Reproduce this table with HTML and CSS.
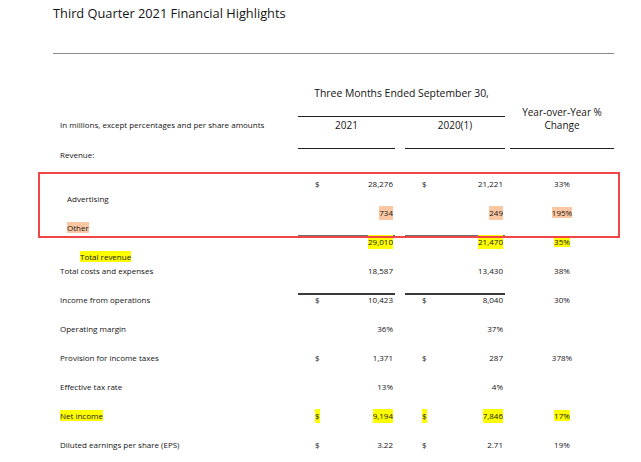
FILE: index.html
```html
<!DOCTYPE html>
<html lang="en">
<head>
<meta charset="utf-8">
<title>Third Quarter 2021 Financial Highlights</title>
<link rel="stylesheet" href="styles.css">
</head>
<body>
<div class="page">
  <h1 class="title">Third Quarter 2021 Financial Highlights</h1>
  <hr class="rule">
  <div class="table">
    <div class="head">
      <div class="period">Three Months Ended September 30,</div>
      <div class="yoy">Year-over-Year %<br>Change</div>
      <div class="units">In millions, except percentages and per share amounts</div>
      <div class="year y1">2021</div>
      <div class="year y2">2020(1)</div>
    </div>

    <div class="row section"><div class="label">Revenue:</div></div>

    <div class="row split">
      <div class="label sub">Advertising</div>
      <div class="amt a1"><span class="cur">$</span><span class="num">28,276</span></div>
      <div class="amt a2"><span class="cur">$</span><span class="num">21,221</span></div>
      <div class="pct">33%</div>
    </div>
    <div class="row split">
      <div class="label sub"><span class="hl-o">Other</span></div>
      <div class="amt a1"><span class="num hl-o">734</span></div>
      <div class="amt a2"><span class="num hl-o">249</span></div>
      <div class="pct"><span class="hl-o">195%</span></div>
    </div>
    <div class="row split">
      <div class="label total"><span class="hl-y">Total revenue</span></div>
      <div class="amt a1 ul-light"><span class="num hl-y">29,010</span></div>
      <div class="amt a2 ul-light"><span class="num hl-y">21,470</span></div>
      <div class="pct"><span class="hl-y">35%</span></div>
    </div>
    <div class="row">
      <div class="label">Total costs and expenses</div>
      <div class="amt a1"><span class="num">18,587</span></div>
      <div class="amt a2"><span class="num">13,430</span></div>
      <div class="pct">38%</div>
    </div>
    <div class="row">
      <div class="label">Income from operations</div>
      <div class="amt a1 ul-dark"><span class="cur">$</span><span class="num">10,423</span></div>
      <div class="amt a2 ul-dark"><span class="cur">$</span><span class="num">8,040</span></div>
      <div class="pct">30%</div>
    </div>
    <div class="row">
      <div class="label">Operating margin</div>
      <div class="amt a1"><span class="num">36%</span></div>
      <div class="amt a2"><span class="num">37%</span></div>
    </div>
    <div class="row">
      <div class="label">Provision for income taxes</div>
      <div class="amt a1"><span class="cur">$</span><span class="num">1,371</span></div>
      <div class="amt a2"><span class="cur">$</span><span class="num">287</span></div>
      <div class="pct">378%</div>
    </div>
    <div class="row">
      <div class="label">Effective tax rate</div>
      <div class="amt a1"><span class="num">13%</span></div>
      <div class="amt a2"><span class="num">4%</span></div>
    </div>
    <div class="row">
      <div class="label"><span class="hl-y">Net income</span></div>
      <div class="amt a1"><span class="cur hl-y">$</span><span class="num hl-y">9,194</span></div>
      <div class="amt a2"><span class="cur hl-y">$</span><span class="num hl-y">7,846</span></div>
      <div class="pct"><span class="hl-y">17%</span></div>
    </div>
    <div class="row">
      <div class="label">Diluted earnings per share (EPS)</div>
      <div class="amt a1"><span class="cur">$</span><span class="num">3.22</span></div>
      <div class="amt a2"><span class="cur">$</span><span class="num">2.71</span></div>
      <div class="pct">19%</div>
    </div>

    <div class="redbox"></div>
  </div>
</div>
</body>
</html>
```

FILE: styles.css
```css
* { box-sizing: border-box; }

body {
  margin: 0;
  background: #fff;
  font-family: "Open Sans", "Liberation Sans", sans-serif;
  color: #141414;
}

.page {
  padding-left: 53px;
  width: 614px;
}

.title {
  margin: 3px 0 0;
  font-size: 12.8px;
  line-height: 20px;
  font-weight: 400;
}

.rule {
  margin: 30px 0 0;
  border: 0;
  height: 1px;
  background: #8a8a8a;
}

.table {
  position: relative;
}

.head,
.row {
  display: grid;
  grid-template-columns: 245px 97px 10px 100px 5px 104px;
}

.period {
  grid-column: 2 / 5;
  grid-row: 1;
  text-align: center;
  font-size: 10.4px;
  line-height: 16px;
  padding: 31px 0 15px;
  border-bottom: 1px solid #222;
}

.yoy {
  grid-column: 6;
  grid-row: 1 / 3;
  align-self: end;
  text-align: center;
  font-size: 10px;
  line-height: 13px;
  padding-bottom: 16px;
  border-bottom: 1px solid #222;
}

.units {
  grid-column: 1;
  grid-row: 2;
  font-size: 8px;
  line-height: 14px;
  padding: 1px 0 0 7px;
}

.year {
  grid-row: 2;
  text-align: center;
  font-size: 10px;
  line-height: 14px;
  padding: 1px 0 16px;
  border-bottom: 1px solid #222;
}

.y1 { grid-column: 2; }
.y2 { grid-column: 4; }

.row {
  height: 29px;
  align-items: start;
  font-size: 8px;
  line-height: 14px;
}

.row.section { height: 28px; }
.section .label { line-height: 12px; }

.label {
  grid-column: 1;
  padding-left: 7px;
}

.split .label { align-self: end; }
.label.sub { padding-left: 14px; }
.label.total { padding-left: 27px; }

.amt {
  display: flex;
  padding: 0 2px 0 17px;
}

.num { margin-left: auto; }

.a1 { grid-column: 2; }
.a2 { grid-column: 4; }

.pct {
  grid-column: 6;
  text-align: center;
}

.ul-light { box-shadow: inset 0 2px 0 #6f6f6f; }
.ul-dark { box-shadow: inset 0 2px 0 #3a3a3a; }

.hl-y { background: #ffff00; }
.hl-o { background: #fbc7a2; }

.redbox {
  position: absolute;
  left: -15px;
  top: 118px;
  width: 582px;
  height: 66px;
  border: 2px solid #f24545;
  pointer-events: none;
}
```
